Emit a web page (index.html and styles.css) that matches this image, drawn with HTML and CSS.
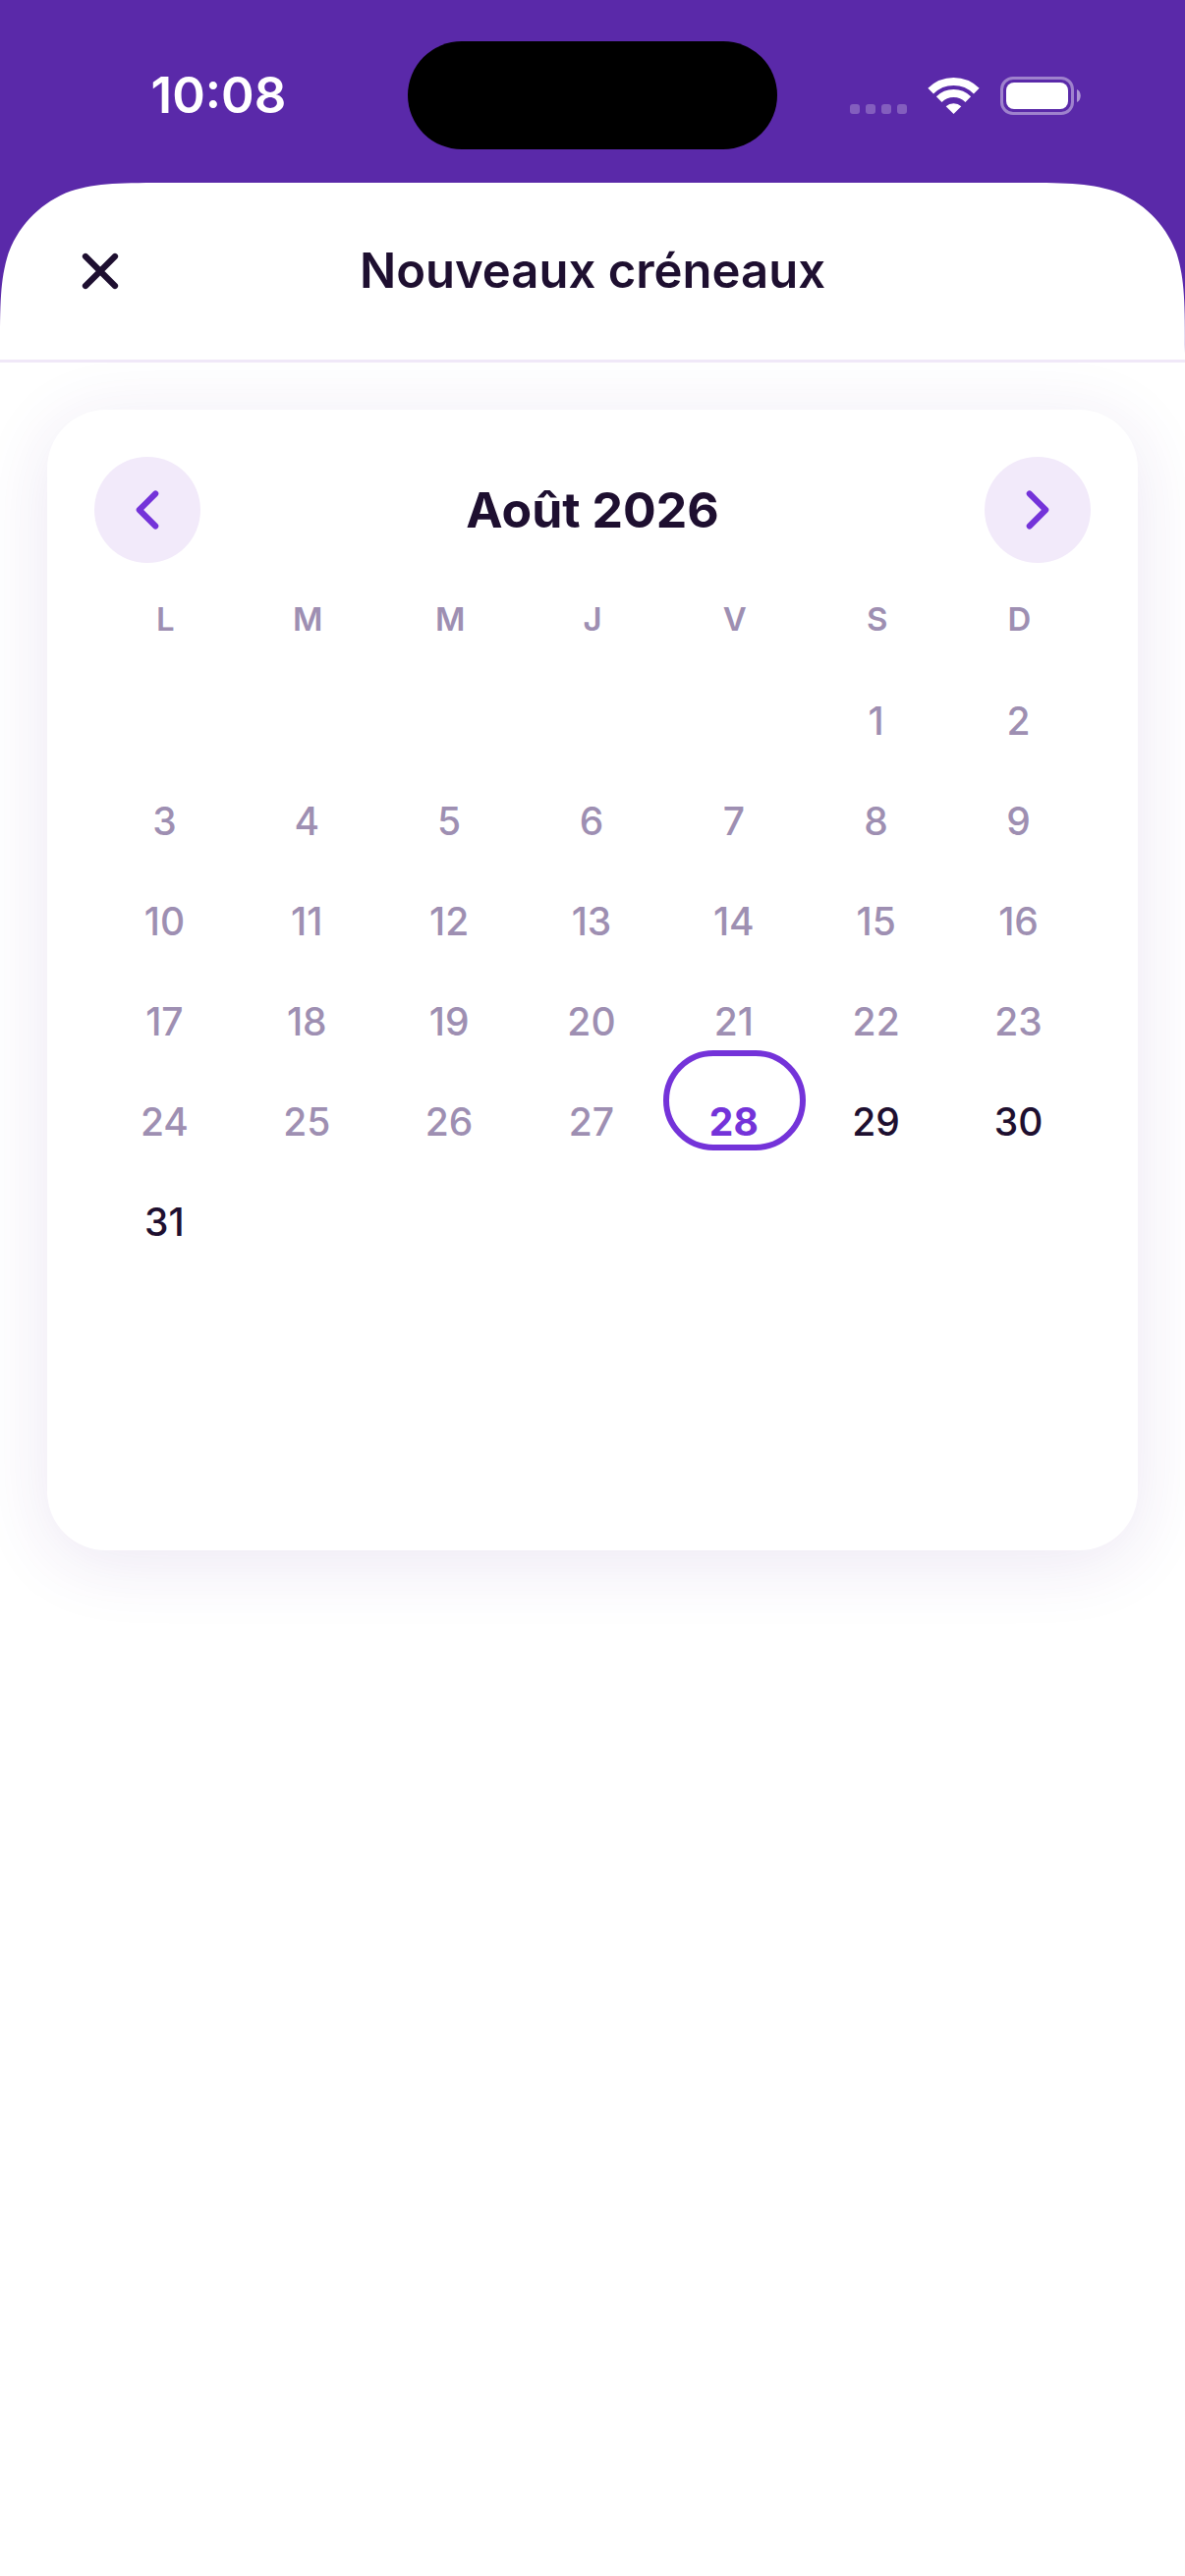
FILE: index.html
```html
<!DOCTYPE html>
<html lang="fr">
<head>
    <meta charset="UTF-8">
    <meta name="viewport" content="width=device-width, initial-scale=1">
    <title>Nouveaux créneaux</title>
    <link rel="stylesheet" href="styles.css">
</head>
<body>
    <div class="status-bar">
        <time class="status-time">10:08</time>
        <div class="island"></div>
        <svg class="status-icons" width="235" height="39" viewBox="0 0 235 39" aria-hidden="true">
            <g fill="#fff" fill-opacity="0.25">
                <rect x="0" y="28" width="10" height="10" rx="3"/>
                <rect x="16" y="28" width="10" height="10" rx="3"/>
                <rect x="32" y="28" width="10" height="10" rx="3"/>
                <rect x="48" y="28" width="10" height="10" rx="3"/>
            </g>
            <g fill="none" stroke="#fff" stroke-width="8">
                <path d="M82.2 14.7A33 33 0 0 1 128.8 14.7"/>
                <path d="M90.7 23.2A21 21 0 0 1 120.3 23.2"/>
            </g>
            <path d="M105.5 38L97.7 30.2A11.5 11.5 0 0 1 113.3 30.2Z" fill="#fff"/>
            <rect x="154.5" y="1.5" width="72" height="36" rx="11.5" fill="none" stroke="#fff" stroke-opacity="0.42" stroke-width="3"/>
            <rect x="159" y="6" width="63" height="27" rx="8" fill="#fff"/>
            <path d="M231 13C236 15 236 24 231 26Z" fill="#fff" fill-opacity="0.5"/>
        </svg>
    </div>

    <main class="sheet">
        <svg class="corner corner-left" width="174" height="174" viewBox="0 0 174 174" aria-hidden="true">
            <path d="M0 0H174C124 0 99 0 72 8.5C42.5 19.3 19.3 42.5 8.5 72C0 99 0 124 0 174Z"/>
        </svg>
        <svg class="corner corner-right" width="174" height="174" viewBox="0 0 174 174" aria-hidden="true">
            <path d="M174 0H0C50 0 75 0 102 8.5C131.5 19.3 154.7 42.5 165.5 72C174 99 174 124 174 174Z"/>
        </svg>

        <header class="sheet-header">
            <button class="close-button" type="button" aria-label="Fermer">
                <svg width="60" height="60" viewBox="0 0 24 24" aria-hidden="true">
                    <path d="M18 6L6 18M6 6l12 12"/>
                </svg>
            </button>
            <h1>Nouveaux créneaux</h1>
        </header>

        <div class="content">
            <section class="calendar">
                <div class="calendar-nav">
                    <button class="nav-button" type="button" aria-label="Mois précédent">
                        <svg width="66" height="66" viewBox="0 0 24 24" aria-hidden="true">
                            <path d="M15 18l-6-6 6-6"/>
                        </svg>
                    </button>
                    <h2>Août 2026</h2>
                    <button class="nav-button" type="button" aria-label="Mois suivant">
                        <svg width="66" height="66" viewBox="0 0 24 24" aria-hidden="true">
                            <path d="M9 18l6-6-6-6"/>
                        </svg>
                    </button>
                </div>

                <table class="month">
                    <thead>
                        <tr>
                            <th>L</th>
                            <th>M</th>
                            <th>M</th>
                            <th>J</th>
                            <th>V</th>
                            <th>S</th>
                            <th>D</th>
                        </tr>
                    </thead>
                    <tbody>
                        <tr>
                            <td colspan="5"></td>
                            <td><button class="day" type="button" disabled>1</button></td>
                            <td><button class="day" type="button" disabled>2</button></td>
                        </tr>
                        <tr>
                            <td><button class="day" type="button" disabled>3</button></td>
                            <td><button class="day" type="button" disabled>4</button></td>
                            <td><button class="day" type="button" disabled>5</button></td>
                            <td><button class="day" type="button" disabled>6</button></td>
                            <td><button class="day" type="button" disabled>7</button></td>
                            <td><button class="day" type="button" disabled>8</button></td>
                            <td><button class="day" type="button" disabled>9</button></td>
                        </tr>
                        <tr>
                            <td><button class="day" type="button" disabled>10</button></td>
                            <td><button class="day" type="button" disabled>11</button></td>
                            <td><button class="day" type="button" disabled>12</button></td>
                            <td><button class="day" type="button" disabled>13</button></td>
                            <td><button class="day" type="button" disabled>14</button></td>
                            <td><button class="day" type="button" disabled>15</button></td>
                            <td><button class="day" type="button" disabled>16</button></td>
                        </tr>
                        <tr>
                            <td><button class="day" type="button" disabled>17</button></td>
                            <td><button class="day" type="button" disabled>18</button></td>
                            <td><button class="day" type="button" disabled>19</button></td>
                            <td><button class="day" type="button" disabled>20</button></td>
                            <td><button class="day" type="button" disabled>21</button></td>
                            <td><button class="day" type="button" disabled>22</button></td>
                            <td><button class="day" type="button" disabled>23</button></td>
                        </tr>
                        <tr>
                            <td><button class="day" type="button" disabled>24</button></td>
                            <td><button class="day" type="button" disabled>25</button></td>
                            <td><button class="day" type="button" disabled>26</button></td>
                            <td><button class="day" type="button" disabled>27</button></td>
                            <td><button class="day today" type="button" aria-current="date">28</button></td>
                            <td><button class="day" type="button">29</button></td>
                            <td><button class="day" type="button">30</button></td>
                        </tr>
                        <tr>
                            <td><button class="day" type="button">31</button></td>
                            <td colspan="6"></td>
                        </tr>
                    </tbody>
                </table>
            </section>
        </div>
    </main>
</body>
</html>
```

FILE: styles.css
```css
* {
    box-sizing: border-box;
}

body {
    display: flex;
    flex-direction: column;
    min-height: 100vh;
    margin: 0;
    background-color: #5a29a9;
    color: #1e0f30;
    font-family: Inter, "Liberation Sans", sans-serif;
}

button {
    margin: 0;
    padding: 0;
    border: none;
    background: none;
    color: inherit;
    font: inherit;
    cursor: pointer;
}

h1,
h2 {
    margin: 0;
    line-height: 60px;
    text-align: center;
}

/* Status bar */
.status-bar {
    display: grid;
    grid-template-columns: 1fr 376px 1fr;
    align-items: center;
    justify-items: center;
    padding: 42px 0 34px;
}

.status-time {
    padding-left: 30px;
    color: #fff;
    font-size: 51px;
    font-weight: 600;
    line-height: 60px;
}

.island {
    width: 100%;
    height: 110px;
    border-radius: 55px;
    background-color: #000;
}

.status-icons {
    margin-right: 32px;
}

/* Sheet */
.sheet {
    position: relative;
    display: flex;
    flex: 1;
    flex-direction: column;
    background-color: #fff;
}

.corner {
    position: absolute;
    top: 0;
    fill: #5a29a9;
}

.corner-left {
    left: 0;
}

.corner-right {
    right: 0;
}

.sheet-header {
    position: relative;
    display: grid;
    grid-template-columns: 60px 1fr 60px;
    align-items: center;
    padding: 60px 72px;
    border-bottom: 3px solid #f0e8f8;
}

.sheet-header h1 {
    font-size: 49px;
    font-weight: 600;
}

.close-button {
    height: 60px;
}

.close-button svg,
.nav-button svg {
    display: block;
    fill: none;
    stroke: currentColor;
    stroke-width: 2.5;
    stroke-linecap: round;
    stroke-linejoin: round;
}

.nav-button svg {
    stroke-width: 2.2;
}

.content {
    flex: 1;
    padding: 48px;
    overflow: hidden;
}

/* Calendar */
.calendar {
    min-height: 1161px;
    padding: 48px;
    border-radius: 60px;
    background-color: #fff;
    box-shadow: 0 12px 72px rgba(82, 36, 150, 0.11);
}

.calendar-nav {
    display: flex;
    align-items: center;
    justify-content: space-between;
}

.calendar-nav h2 {
    font-size: 50px;
    font-weight: 700;
}

.nav-button {
    display: flex;
    align-items: center;
    justify-content: center;
    width: 108px;
    height: 108px;
    border-radius: 50%;
    background-color: #f2eafa;
    color: #7433d9;
}

.month {
    width: 100%;
    border-collapse: collapse;
    table-layout: fixed;
}

.month th {
    height: 88px;
    padding: 25px 0 0;
    color: #9e8fb2;
    font-size: 33px;
    font-weight: 600;
    line-height: 40px;
}

.month td {
    height: 102px;
    padding: 0;
}

.day {
    display: block;
    width: 100%;
    height: 102px;
    padding: 43px 2px 0 0;
    border: 6px solid transparent;
    border-radius: 51px;
    font-size: 39px;
    font-weight: 500;
    line-height: 46px;
}

.day:disabled {
    color: #9e8fb2;
    cursor: default;
}

.today {
    border-color: #7433d9;
    color: #7433d9;
    font-weight: 700;
}
```
